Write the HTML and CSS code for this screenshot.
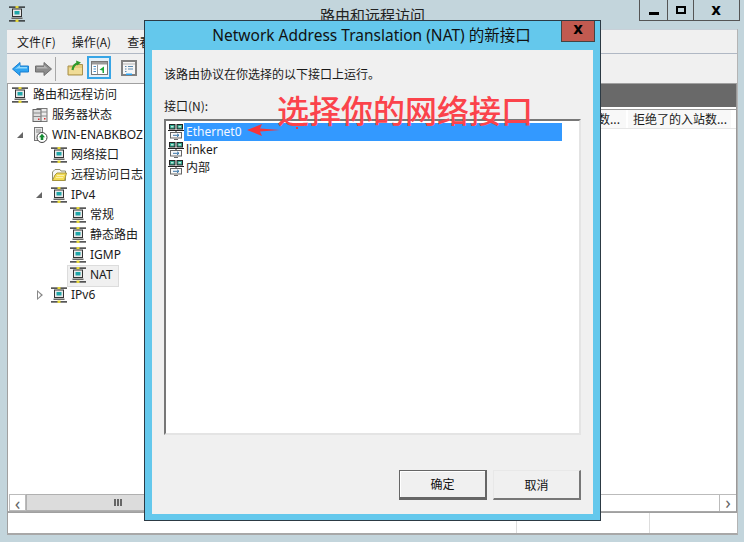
FILE: index.html
```html
<!DOCTYPE html>
<html lang="zh">
<head>
<meta charset="utf-8">
<title>路由和远程访问</title>
<link rel="stylesheet" href="styles.css">
</head>
<body>
<svg class="defs" width="0" height="0" aria-hidden="true">
  <symbol id="net" viewBox="0 0 16 16">
    <rect x="0" y="0.500" width="16" height="1.200" fill="#111"/>
    <rect x="0" y="14.300" width="16" height="1.200" fill="#111"/>
    <rect x="6.500" y="0" width="3" height="2.500" fill="#e6d83c"/>
    <rect x="6.500" y="13.500" width="3" height="2.500" fill="#e6d83c"/>
    <rect x="3.500" y="3" width="9" height="7.500" fill="#e8e8e8" stroke="#333"/>
    <rect x="5.500" y="5" width="5" height="3.500" fill="#1fa5a8"/>
    <rect x="2.500" y="11.500" width="11" height="1.500" fill="#666"/>
  </symbol>
  <symbol id="nic" viewBox="0 0 16 16">
    <rect x="1.500" y=".5" width="5.500" height="4.500" fill="#2fa58c" stroke="#222"/>
    <rect x="9" y=".5" width="5.500" height="4.500" fill="#2fa58c" stroke="#222"/>
    <rect x="3" y="2" width="2.500" height="1.500" fill="#bfe8dc"/>
    <rect x="10.500" y="2" width="2.500" height="1.500" fill="#bfe8dc"/>
    <path d="M0 6.500H16" stroke="#222"/>
    <path d="M8 6.500V9" stroke="#222"/>
    <rect x="2.500" y="8.500" width="11" height="5.500" fill="#f8f8f8" stroke="#666"/>
    <path d="M5 11.300H11M9 9.800L11 11.300 9 12.800" fill="none" stroke="#3b76a8"/>
    <path d="M6 15.500H10" stroke="#666"/>
  </symbol>
</svg>

<div class="desktop">
  <header class="titlebar">
    <svg class="app-icon"><use href="#net"/></svg>
    <div class="app-title">路由和远程访问</div>
    <div class="caption">
      <span class="cap-btn cap-min"><i class="glyph-min"></i></span>
      <span class="cap-btn cap-max"><i class="glyph-max"></i></span>
      <span class="cap-btn cap-close">x</span>
    </div>
  </header>

  <div class="window">
    <nav class="menubar">
      <span>文件(F)</span><span>操作(A)</span><span>查看(V)</span>
    </nav>
    <div class="toolbar">
      <svg class="tool t-back" viewBox="0 0 17 16"><path d="M.5 8L8 1.500V5H16.500V11H8V14.500Z" fill="#2fa4f2" stroke="#1b7fd0"/><path d="M3 8L8 4V6H15V7.500H6Z" fill="#8fd8fb"/></svg>
      <svg class="tool t-fwd" viewBox="0 0 17 16"><path d="M16.500 8L9 1.500V5H.5V11H9V14.500Z" fill="#8c8c8c" stroke="#6e6e6e"/><path d="M2 6H9V4L13 7.500H2Z" fill="#b4b4b4"/></svg>
      <span class="tool-sep"></span>
      <svg class="tool t-folder" viewBox="0 0 17 16"><path d="M1 6H6L7 4.500H15.500V15H1Z" fill="#e6cc7c" stroke="#a8914c"/><path d="M2 8H15V14H2Z" fill="#f0dc96"/><path d="M5.500 10C6 6 8 4 11 3" fill="none" stroke="#2f9a2c" stroke-width="2.200"/><path d="M9 .5L14 2.500 10 5.500Z" fill="#2f9a2c"/></svg>
      <span class="tool-on"><svg class="tool" viewBox="0 0 17 16"><rect x=".5" y="1.500" width="16" height="13" fill="#fff" stroke="#777"/><rect x="1" y="2" width="15" height="2.500" fill="#9a9a9a"/><path d="M6.500 4.500V14" stroke="#999"/><path d="M2.500 6.500H5M2.500 9H5M2.500 11.500H5" stroke="#4a90c8"/><path d="M13 6.500V13H11.500V10.500L8.500 9.700 11.500 7.500Z" fill="#1fa83c"/></svg></span>
      <svg class="tool t-list" viewBox="0 0 16 16"><rect x="1" y="1" width="14" height="14" fill="#f6f6f6" stroke="#808080" stroke-width="2"/><path d="M2 4H14" stroke="#b4b4b4"/><path d="M4 6.500H5.500M7 6.500H12M4 9H5.500M7 9H12M4 11.500H5.500" stroke="#5a8ab0"/><rect x="5" y="13.500" width="6" height="1.500" fill="#2fa4f2"/></svg>
    </div>

    <main class="panes">
      <div class="tree-pane">
        <ul class="tree">
          <li class="lv0"><svg class="ti"><use href="#net"/></svg>路由和远程访问</li>
          <li class="lv1"><svg class="ti" viewBox="0 0 16 16"><rect x="5" y="1.500" width="10" height="13" fill="#ececec" stroke="#777"/><rect x="1" y="2.500" width="8" height="12" fill="#dedede" stroke="#666"/><path d="M1 6H9M1 9.500H9M9 5H15M9 9H15" stroke="#8a8a8a"/><rect x="6" y="11.500" width="1.500" height="1.500" fill="#d92a2a"/><rect x="12" y="11" width="1.500" height="1.500" fill="#d92a2a"/></svg>服务器状态</li>
          <li class="lv1 has-arrow"><i class="arrow-open"></i><svg class="ti" viewBox="0 0 16 16"><rect x="2.500" y=".5" width="8" height="13" fill="#e8e8e8" stroke="#777"/><path d="M4 3H9M4 5H9" stroke="#8a8a8a"/><circle cx="10" cy="10.500" r="5" fill="#fff" stroke="#444"/><path d="M10 6.800L13 10.300H11.300V13H8.700V10.300H7Z" fill="#128a30"/></svg>WIN-ENABKBOZ</li>
          <li class="lv2"><svg class="ti"><use href="#net"/></svg>网络接口</li>
          <li class="lv2"><svg class="ti" viewBox="0 0 16 16"><path d="M1.500 5L4 2.500H9L10 4H14.500V13.500H1.500Z" fill="#f4f4f4" stroke="#8c8c70"/><path d="M4 8L6 6H15.500L13.500 13.500H1.500Z" fill="#f3dc55" stroke="#a8963c"/><path d="M6 8.500H13M5 10.500H12" stroke="#fbf0a8"/></svg>远程访问日志</li>
          <li class="lv2 has-arrow"><i class="arrow-open"></i><svg class="ti"><use href="#net"/></svg>IPv4</li>
          <li class="lv3"><svg class="ti"><use href="#net"/></svg>常规</li>
          <li class="lv3"><svg class="ti"><use href="#net"/></svg>静态路由</li>
          <li class="lv3"><svg class="ti"><use href="#net"/></svg>IGMP</li>
          <li class="lv3 selected"><svg class="ti"><use href="#net"/></svg><span>NAT</span></li>
          <li class="lv2 has-arrow"><i class="arrow-closed"></i><svg class="ti"><use href="#net"/></svg>IPv6</li>
        </ul>
        <div class="hscroll">
          <span class="sb-btn">‹</span>
          <span class="sb-track"><i class="grip"></i></span>
        </div>
      </div>
      <div class="detail-pane">
        <div class="dark-band"></div>
        <div class="list-head">
          <span class="col col-a">数...</span>
          <span class="col col-b">拒绝了的入站数...</span>
        </div>
        <div class="hscroll-right"><span class="sb-btn-r">›</span></div>
      </div>
    </main>

    <footer class="statusbar">
      <span class="st st-a"></span><span class="st st-b"></span><span class="st st-c"></span>
    </footer>
  </div>

  <section class="dialog">
    <div class="dlg-title">Network Address Translation (NAT) 的新接口</div>
    <span class="dlg-close">x</span>
    <div class="dlg-body">
      <p class="dlg-intro">该路由协议在你选择的以下接口上运行。</p>
      <div class="dlg-label">接口(N):</div>
      <ul class="iface-list">
        <li class="iface-sel"><svg class="ni"><use href="#nic"/></svg><span>Ethernet0</span></li>
        <li><svg class="ni"><use href="#nic"/></svg><span>linker</span></li>
        <li><svg class="ni"><use href="#nic"/></svg><span>内部</span></li>
      </ul>
      <div class="dlg-actions">
        <button class="btn btn-default">确定</button>
        <button class="btn">取消</button>
      </div>
    </div>
    <div class="note">选择你的网络接口</div>
    <svg class="note-arrow" viewBox="0 0 34 12"><path d="M0 6L15 0 13 4.500 33 6 13 7.500 15 12Z" fill="#f8333a"/></svg>
    <i class="note-dot"></i>
  </section>
</div>
</body>
</html>
```

FILE: styles.css
```css
* { box-sizing: border-box; }
html, body { margin: 0; padding: 0; }
body {
  width: 744px; height: 542px; overflow: hidden;
  font: 12px/18px "Noto Sans", "Noto Sans CJK SC", sans-serif;
  color: #1a1a1a; background: #c3d5dc;
}
.defs { position: absolute; }
.desktop {
  position: relative; width: 744px; height: 542px;
  display: flex; flex-direction: column; padding: 0 6px 7px 7px;
}
ul { list-style: none; margin: 0; padding: 0; }

.titlebar { height: 29px; flex: none; position: relative; }
.app-icon { position: absolute; left: 2px; top: 6px; width: 16px; height: 16px; }
.app-title {
  position: absolute; left: 313px; top: 5px; font-size: 15px; line-height: 20px;
  font-family: "Noto Sans CJK SC", sans-serif; color: #222;
}
.caption {
  position: absolute; right: -2px; top: 0; height: 21px; display: flex;
  border: 1px solid #555; border-top: 0; background: #c3d5dc;
}
.cap-btn {
  display: flex; align-items: center; justify-content: center;
  height: 20px; border-left: 1px solid #555; color: #000;
}
.cap-min { width: 27px; border-left: 0; }
.cap-max { width: 26px; }
.cap-close { width: 46px; padding-right: 1px; font: bold 15px/18px "DejaVu Sans", sans-serif; }
.glyph-min { width: 10px; height: 3px; background: #000; margin-top: 6px; }
.glyph-max { width: 10px; height: 8px; border: 2px solid #000; }

.window {
  flex: 1; min-height: 0; display: flex; flex-direction: column;
  background: #f0f0f0; border-right: 1px solid #b4b4b4; border-bottom: 2px solid #a8a8a8;
}
.menubar {
  height: 25px; flex: none; display: flex; gap: 16px; align-items: center; padding: 1px 0 0 10px;
  border-top: 1px solid #c8d0d8; border-bottom: 1px solid #b0b8c4;
  font-family: "Noto Sans CJK SC", sans-serif;
}
.toolbar {
  height: 30px; flex: none; display: flex; align-items: center; padding-left: 5px;
  border-bottom: 1px solid #a0a0a0;
}
.tool { width: 17px; height: 16px; display: block; flex: none; }
.t-fwd { margin-left: 6px; }
.tool-sep { width: 1px; height: 24px; background: #a8a8a8; margin: 0 11px 0 3px; }
.t-folder { margin-top: -2px; }
.tool-on {
  width: 24px; height: 23px; display: flex; align-items: center; justify-content: center;
  background: #e4f0f8; border: 2px solid #37a5e6; margin: -2px 10px 0 3px;
}
.t-list { width: 16px; margin-top: -2px; }

.panes { flex: 1; min-height: 0; display: flex; }
.tree-pane {
  width: 590px; display: flex; flex-direction: column; background: #fff;
  border-left: 1px solid #a0a0a0; border-right: 1px solid #a0a0a0;
}
.tree { flex: 1; padding-top: 1px; }
.tree li { height: 20px; display: flex; align-items: center; position: relative; white-space: nowrap; }
.ti { width: 16px; height: 16px; flex: none; margin-right: 4px; }
.lv0 { padding-left: 4px; }
.lv0 .ti { margin-right: 5px; }
.lv1 { padding-left: 24px; }
.lv2 { padding-left: 43px; }
.lv3 { padding-left: 62px; }
.tree .selected::before {
  content: ""; position: absolute; left: 59px; top: 0; width: 50px; height: 20px;
  background: #f0f0f0; border: 1px solid #dcdcdc;
}
.tree .selected .ti, .tree .selected span { position: relative; }
.arrow-open {
  position: absolute; margin-left: -15px; top: 7px; width: 0; height: 0;
  border-left: 6px solid transparent; border-bottom: 6px solid #666;
}
.arrow-closed {
  position: absolute; margin-left: -14px; top: 5px; width: 6px; height: 10px;
  background: #888; clip-path: polygon(0 0, 100% 50%, 0 100%, 0 0, 1px 2px, 1px 8px, 4px 50%, 1px 2px);
}
.hscroll {
  height: 18px; flex: none; display: flex; padding: 0 0 0 1px; border-bottom: 1px solid #a8a8a8;
}
.sb-btn {
  width: 17px; display: flex; align-items: center; justify-content: center;
  background: #fff; border: 1px solid #bbb; font-size: 18px; line-height: 14px; color: #666;
}
.sb-track {
  flex: 1; display: flex; align-items: center; padding-left: 87px; background: #dcdcdc; border: 1px solid #b0b0b0;
}
.grip {
  width: 8px; height: 7px;
  background: repeating-linear-gradient(90deg, #666 0 2px, transparent 2px 3px);
}

.detail-pane { flex: 1; min-width: 0; display: flex; flex-direction: column; background: #fff; border-right: 1px solid #999; }
.dark-band { height: 23px; flex: none; background: #696969; margin-bottom: 2px; }
.list-head {
  height: 20px; flex: none; display: flex; gap: 2px; justify-content: flex-end; padding-right: 5px;
  border-top: 1px solid #999; border-bottom: 1px solid #e6e6e6;
}
.col { background: #f8f8f8; white-space: nowrap; line-height: 18px; font-family: "Noto Sans CJK SC", sans-serif; }
.col-a { flex: 1; text-align: right; padding-right: 6px; }
.col-b { width: 103px; padding-left: 5px; }
.hscroll-right { margin-top: auto; height: 18px; display: flex; justify-content: flex-end; border-bottom: 1px solid #a8a8a8; border-top: 1px solid #bbb; }
.sb-btn-r { width: 17px; text-align: center; border-left: 1px solid #bbb; font-size: 18px; line-height: 14px; color: #666; }

.statusbar { height: 21px; flex: none; display: flex; background: #fff; border-top: 1px solid #a0a0a0; border-left: 1px solid #a0a0a0; }
.st-a { width: 509px; border-right: 1px solid #ddd; }
.st-b { width: 133px; border-right: 1px solid #ddd; }
.st-c { flex: 1; }

.dialog {
  position: absolute; left: 144px; top: 20px; width: 457px; height: 501px;
  background: #64c8ec; border: 1px solid #2c3a44;
  display: flex; flex-direction: column; padding: 0 7px 6px;
}
.dlg-title {
  height: 29px; flex: none; text-align: center; line-height: 28px; font-size: 15.500px;
  color: #111; padding-right: 2px; white-space: nowrap;
}
.dlg-close {
  position: absolute; right: 5px; top: 0; width: 34px; height: 21px;
  background: #c15a50; border: 1px solid #444; border-top: 0; text-align: center;
  font: bold 15px/17px "DejaVu Sans", sans-serif; color: #000;
}
.dlg-body {
  flex: 1; min-height: 0; background: #f0f0f0; padding: 15px 12px 14px;
  display: flex; flex-direction: column;
  font-family: "Noto Sans CJK SC", sans-serif;
}
.dlg-intro { margin: 0 0 14px; line-height: 18px; }
.dlg-label { line-height: 18px; margin-bottom: 4px; }
.iface-list {
  flex: 1; min-height: 0; background: #fff; padding: 2px 17px 0 2px;
  border: 2px solid; border-color: #777 #e4e4e4 #e4e4e4 #777;
  font-family: "Noto Sans", "Noto Sans CJK SC", sans-serif;
}
.iface-list li { height: 18px; display: flex; align-items: center; line-height: 18px; }
.ni { width: 16px; height: 16px; flex: none; }
.iface-list span { flex: 1; padding-left: 2px; height: 18px; }
.iface-sel span { background: #3399ff; color: #f4f8ff; }
.dlg-actions { flex: none; display: flex; justify-content: flex-end; gap: 6px; margin-top: 35px; }
.btn {
  width: 88px; height: 30px; padding: 0; background: #f0f0f0;
  border: 1px solid #e8e8e8; border-right: 2px solid #777; border-bottom: 2px solid #777;
  font: inherit; color: #111;
}
.btn-default { border: 1px solid #666; border-right: 2px solid #666; border-bottom: 3px solid #666; box-shadow: inset 1px 1px 0 #fff; }
.note {
  position: absolute; left: 132px; top: 69px; font-size: 32px; line-height: 38px; font-weight: 500;
  font-family: "Noto Sans CJK SC", sans-serif; color: #fb434b; white-space: nowrap;
}
.note-arrow { position: absolute; left: 102px; top: 103px; width: 34px; height: 12px; }
.note-dot { position: absolute; left: 151px; top: 106px; width: 2px; height: 2px; background: #f8333a; }
```
